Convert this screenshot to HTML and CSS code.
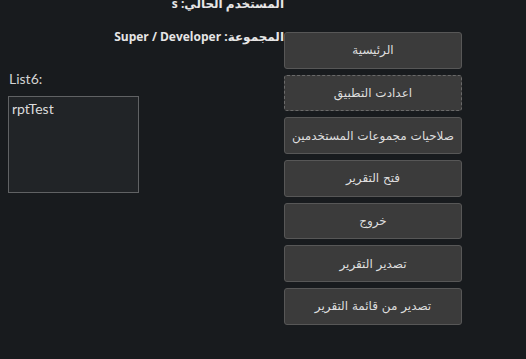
FILE: index.html
```html
<!DOCTYPE html>
<html lang="ar">
<head>
    <meta charset="UTF-8">
    <meta name="viewport" content="width=device-width, initial-scale=1.0">
    <title>الرئيسية</title>
    <link rel="stylesheet" href="styles.css">
</head>
<body>
    <div class="main">
        <div class="info">
            <p class="info_line info_user" dir="rtl">المستخدم الحالي: s</p>
            <p class="info_line info_group" dir="rtl">المجموعة: Super / Developer</p>
            <label class="list_label" for="list6">List6:</label>
            <div class="listbox" id="list6">
                <div class="listbox_item">rptTest</div>
            </div>
        </div>
        <div class="menu">
            <button class="btn">الرئيسية</button>
            <button class="btn btn-focus">اعدادت التطبيق</button>
            <button class="btn">صلاحيات مجموعات المستخدمين</button>
            <button class="btn">فتح التقرير</button>
            <button class="btn">خروج</button>
            <button class="btn">تصدير التقرير</button>
            <button class="btn">تصدير من قائمة التقرير</button>
        </div>
    </div>
</body>
</html>
```

FILE: styles.css
```css
* {
    margin: 0;
    padding: 0;
    box-sizing: border-box;
}
html, body {
    height: 100%;
    overflow: hidden;
}
body {
    background-color: #181b1e;
    padding: 8px;
}
.main {
    display: flex;
    align-items: flex-start;
}
.info {
    width: 276px;
    display: flex;
    flex-direction: column;
}
.info_line {
    font-family: "Open Sans", "DejaVu Sans", sans-serif;
    font-weight: 700;
    font-size: 12px;
    line-height: 18px;
    color: #e6e6e6;
    text-align: right;
}
.info_user {
    margin-top: -13px;
}
.info_group {
    margin-top: 15px;
}
.list_label {
    margin-top: 24px;
    font-family: "Lato", "Liberation Sans", sans-serif;
    font-size: 14px;
    line-height: 18px;
    color: #d4d4d4;
    padding-left: 1px;
}
.listbox {
    margin-top: 8px;
    width: 131px;
    height: 97px;
    background-color: #212427;
    border: 1px solid #606264;
    padding: 3px 3px;
}
.listbox_item {
    font-family: "Lato", "Liberation Sans", sans-serif;
    font-size: 14px;
    line-height: 17px;
    color: #dcdcdc;
}
.menu {
    width: 178px;
    margin-top: 24px;
    display: flex;
    flex-direction: column;
}
.btn {
    height: 36.67px;
    margin-bottom: 6px;
    background-color: #3b3b3b;
    border: 1px solid #575757;
    border-radius: 3px;
    color: #dedede;
    font-family: "DejaVu Sans", "Noto Sans", sans-serif;
    font-size: 12px;
    outline: none;
    cursor: pointer;
}
.btn:hover {
    background-color: #444;
}
.btn-focus {
    border: 1px dashed #6a6a6a;
}
```
